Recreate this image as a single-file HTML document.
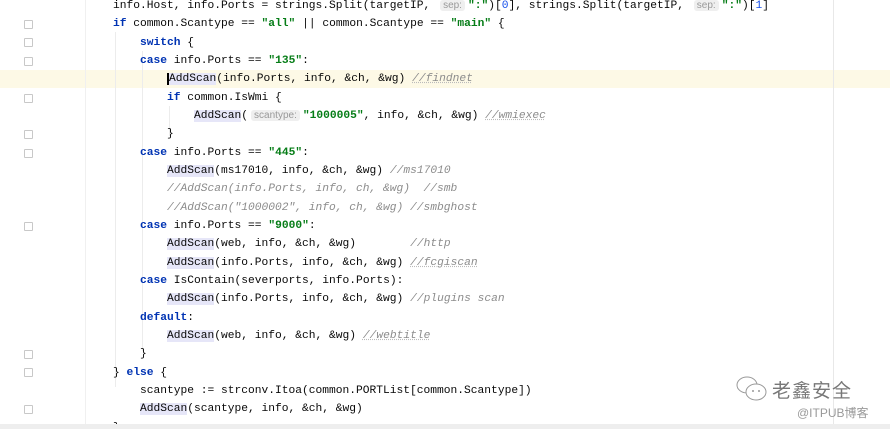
<!DOCTYPE html>
<html><head><meta charset="utf-8"><style>
html,body{margin:0;padding:0;width:890px;height:429px;overflow:hidden;background:#fff;position:relative}
.code{position:absolute;left:113px;top:-3px;font-family:"Liberation Mono",monospace;font-size:11.25px;line-height:18.33px;color:#080808}
.l{height:18.33px;white-space:pre}
.k{color:#0033b3;font-weight:bold}
.s{color:#067d17;font-weight:bold}
.n{color:#1750eb}
.c{color:#8c8c8c;font-style:italic}
.cu{color:#8c8c8c;font-style:italic;text-decoration:underline dotted #bbb}
.h{background:#e6e6f8}
.hint{font-family:"Liberation Sans",sans-serif;font-size:10px;color:#999;background:#efefef;border-radius:3px;padding:0 3px;margin:0 3px}
.hl{position:absolute;left:0;top:70px;width:890px;height:18px;background:#fdf9e6}
.rm{position:absolute;left:833px;top:0;width:1px;height:429px;background:#e8e8e8}
.gl{position:absolute;left:85px;top:0;width:1px;height:429px;background:#f0f0f0}
.fold{position:absolute;left:24px;width:7px;height:7px;border:1px solid #c8c8c8;border-radius:1px}
.bot{position:absolute;left:0;top:424px;width:890px;height:5px;background:#eee}
.ig{position:absolute;width:1px;background:#ececec}
.wm{position:absolute;left:772px;top:378px;font-family:"Noto Sans CJK SC",sans-serif;font-size:19px;color:#777;letter-spacing:1px;line-height:24px}
.wm2{position:absolute;left:797px;top:406px;font-family:"Liberation Sans","Noto Sans CJK SC",sans-serif;font-size:12px;color:#999;line-height:15px}
</style></head><body>
<div class="hl"></div>
<div class="gl"></div>
<div class="rm"></div>
<div class="fold" style="top:20px"></div>
<div class="fold" style="top:38px"></div>
<div class="fold" style="top:57px"></div>
<div class="fold" style="top:94px"></div>
<div class="fold" style="top:130px"></div>
<div class="fold" style="top:149px"></div>
<div class="fold" style="top:222px"></div>
<div class="fold" style="top:350px"></div>
<div class="fold" style="top:368px"></div>
<div class="fold" style="top:405px"></div>
<div class="ig" style="left:115px;top:32px;height:355px"></div>
<div class="ig" style="left:142px;top:51px;height:300px"></div>
<div class="ig" style="left:169px;top:106px;height:30px"></div>
<div class="code"><div class="l">info.Host, info.Ports = strings.Split(targetIP, <span class="hint">sep:</span><span class="s">":"</span>)[<span class="n">0</span>], strings.Split(targetIP, <span class="hint">sep:</span><span class="s">":"</span>)[<span class="n">1</span>]</div><div class="l"><span class="k">if</span> common.Scantype == <span class="s">"all"</span> || common.Scantype == <span class="s">"main"</span> {</div><div class="l">    <span class="k">switch</span> {</div><div class="l">    <span class="k">case</span> info.Ports == <span class="s">"135"</span>:</div><div class="l">        <span class="h" style="border-left:2px solid #000">AddScan</span>(info.Ports, info, &amp;ch, &amp;wg) <span class="cu">//findnet</span></div><div class="l">        <span class="k">if</span> common.IsWmi {</div><div class="l">            <span class="h">AddScan</span>(<span class="hint">scantype:</span><span class="s">"1000005"</span>, info, &amp;ch, &amp;wg) <span class="cu">//wmiexec</span></div><div class="l">        }</div><div class="l">    <span class="k">case</span> info.Ports == <span class="s">"445"</span>:</div><div class="l">        <span class="h">AddScan</span>(ms17010, info, &amp;ch, &amp;wg) <span class="c">//ms17010</span></div><div class="l">        <span class="c">//AddScan(info.Ports, info, ch, &amp;wg)  //smb</span></div><div class="l">        <span class="c">//AddScan("1000002", info, ch, &amp;wg) //smbghost</span></div><div class="l">    <span class="k">case</span> info.Ports == <span class="s">"9000"</span>:</div><div class="l">        <span class="h">AddScan</span>(web, info, &amp;ch, &amp;wg)        <span class="c">//http</span></div><div class="l">        <span class="h">AddScan</span>(info.Ports, info, &amp;ch, &amp;wg) <span class="cu">//fcgiscan</span></div><div class="l">    <span class="k">case</span> IsContain(severports, info.Ports):</div><div class="l">        <span class="h">AddScan</span>(info.Ports, info, &amp;ch, &amp;wg) <span class="c">//plugins scan</span></div><div class="l">    <span class="k">default</span>:</div><div class="l">        <span class="h">AddScan</span>(web, info, &amp;ch, &amp;wg) <span class="cu">//webtitle</span></div><div class="l">    }</div><div class="l">} <span class="k">else</span> {</div><div class="l">    scantype := strconv.Itoa(common.PORTList[common.Scantype])</div><div class="l">    <span class="h">AddScan</span>(scantype, info, &amp;ch, &amp;wg)</div><div class="l">}</div></div>
<svg style="position:absolute;left:734px;top:374px" width="36" height="30" viewBox="0 0 36 30"><ellipse cx="13" cy="11" rx="10" ry="8" fill="none" stroke="#999" stroke-width="1"/><ellipse cx="22" cy="18" rx="10" ry="8" fill="#fff" stroke="#999" stroke-width="1"/><circle cx="19" cy="17" r="1" fill="#999"/><circle cx="25" cy="17" r="1" fill="#999"/></svg>
<div class="wm">老鑫安全</div>
<div class="wm2">@ITPUB博客</div>
<div class="bot"></div>
</body></html>
